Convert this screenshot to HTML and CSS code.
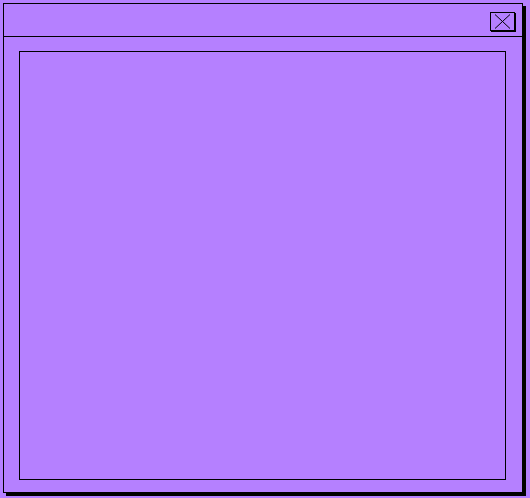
FILE: index.html
```html
<!DOCTYPE html>
<html>
<head>
<meta charset="utf-8">
<link rel="stylesheet" href="styles.css">
</head>
<body>
<div class="window">
  <div class="titlebar">
    <button class="close" aria-label="Close">
      <svg width="23" height="17" viewBox="0 0 23 17"><path d="M4 1.5 L19 15.5 M19 1.5 L4 15.5" stroke="#000" stroke-width="1" fill="none"/></svg>
    </button>
  </div>
  <div class="content">
    <div class="panel"></div>
  </div>
</div>
</body>
</html>
```
FILE: styles.css
```css
html, body {
  margin: 0;
  padding: 0;
  background: #b580ff;
  font-family: "Liberation Sans", sans-serif;
}
body {
  padding: 3px 0 5px 3px;
  min-height: 498px;
  box-sizing: border-box;
}
.window {
  width: 520px;
  height: 490px;
  box-sizing: border-box;
  border: 1px solid #000;
  box-shadow: 3px 3px 0 #000;
  display: flex;
  flex-direction: column;
  background: #b580ff;
}
.titlebar {
  height: 24px;
  border-bottom: 1px solid #000;
  display: flex;
  justify-content: flex-end;
  align-items: flex-start;
  padding: 8px 7px 0 0;
}
.close {
  width: 25px;
  height: 19px;
  padding: 0;
  margin: 0;
  border: 1px solid #000;
  background: #b580ff;
  box-shadow: 1px 1px 0 #000;
  display: flex;
  align-items: center;
  justify-content: center;
}
.close svg { display: block; }
.content {
  flex: 1;
  padding: 14px 16px 12px 15px;
  display: flex;
}
.panel {
  flex: 1;
  border: 1px solid #000;
}
```
